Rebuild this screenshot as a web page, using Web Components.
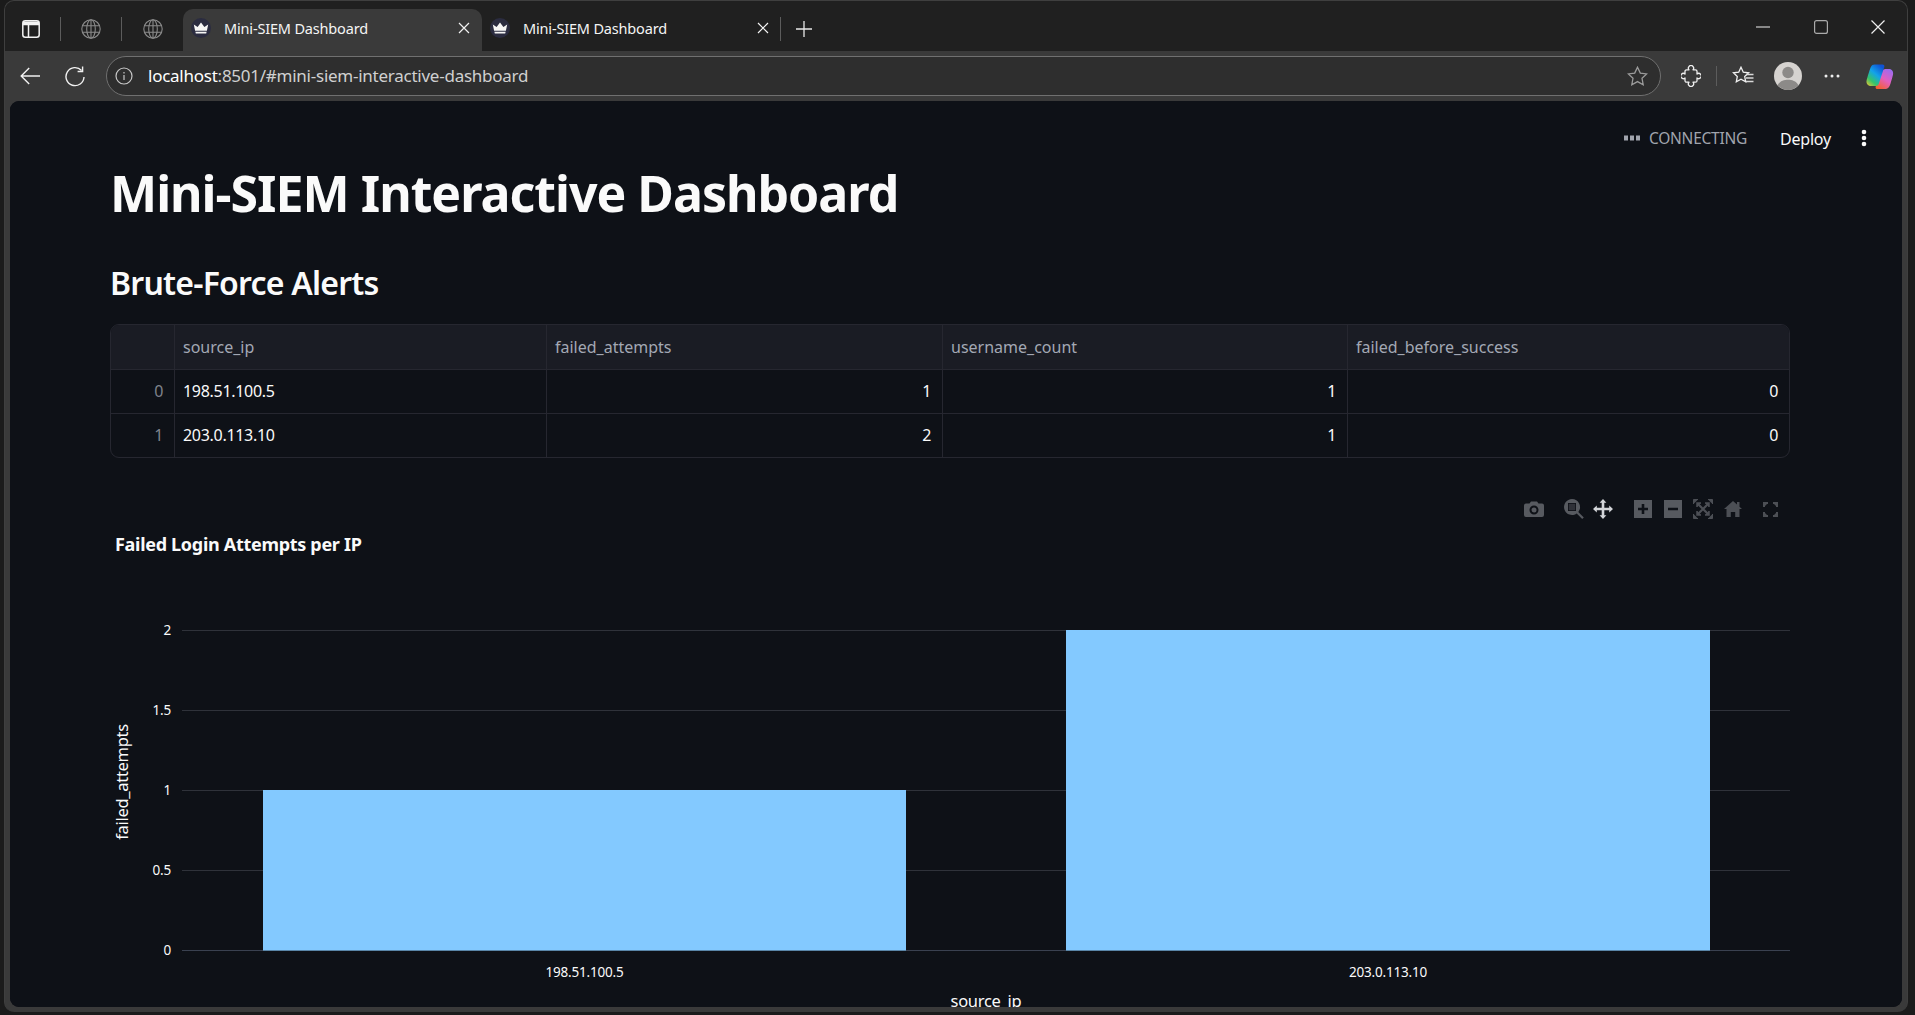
<!DOCTYPE html>
<html lang="en">
<head>
<meta charset="utf-8">
<title>Mini-SIEM Dashboard</title>
<style>
    html, body { margin: 0; padding: 0; height: 100%; background: #1b1b1b; overflow: hidden; }
</style>
</head>
<body>
<browser-window>
    <browser-tabs slot="tabs">
        <browser-tab active label="Mini-SIEM Dashboard"></browser-tab>
        <browser-tab label="Mini-SIEM Dashboard"></browser-tab>
    </browser-tabs>
    <browser-toolbar slot="toolbar" url="localhost:8501/#mini-siem-interactive-dashboard"></browser-toolbar>
    <st-app>
        <st-header></st-header>
        <st-heading level="1">Mini-SIEM Interactive Dashboard</st-heading>
        <st-heading level="2">Brute-Force Alerts</st-heading>
        <data-frame></data-frame>
        <bar-chart></bar-chart>
    </st-app>
</browser-window>

<script>
const chromeFont = '"Noto Sans", "Open Sans", sans-serif';
const appFont = '"Noto Sans", "Open Sans", sans-serif';

const globeIcon = `<svg width="20" height="20" viewBox="0 0 20 20" fill="none" stroke="#8a8a8a" stroke-width="1.1">
    <circle cx="10" cy="10" r="9.2"/><ellipse cx="10" cy="10" rx="4.3" ry="9.2"/>
    <path d="M10 .8v18.4M1.6 6.8h16.8M1.6 13.2h16.8"/></svg>`;
const crownIcon = `<svg width="20" height="20" viewBox="0 0 20 20">
    <circle cx="10" cy="10" r="10" fill="#2b2c40"/>
    <path d="M2.800 6.400 6.600 9 10 4.400 13.400 9l3.800-2.600-1.300 6.400H4.100z" fill="#f6f6f6"/>
    <path d="M4.400 13.700h11.200l-.4 1.800H4.800z" fill="#f6f6f6"/></svg>`;
const closeIcon = `<svg width="12" height="12" viewBox="0 0 12 12" stroke="#f2f2f2" stroke-width="1.2"><path d="M1 1l10 10M11 1 1 11"/></svg>`;

class BrowserWindow extends HTMLElement {
    constructor() {
        super();
        this.attachShadow({ mode: "open" });
        this.shadowRoot.innerHTML = `
            <style>
                :host {
                    display: flex;
                    flex-direction: column;
                    box-sizing: border-box;
                    width: 1904px;
                    height: 1012px;
                    margin-left: 4px;
                    background: #3a3a3a;
                    border: 1px solid #3f3f3f;
                    border-bottom: 0;
                    border-radius: 10px;
                    overflow: hidden;
                }
                .page {
                    flex: 1;
                    min-height: 0;
                    margin: 0 5px 5px 5px;
                    border-radius: 9px;
                    overflow: hidden;
                    background: #0e1117;
                }
            </style>
            <slot name="tabs"></slot>
            <slot name="toolbar"></slot>
            <div class="page"><slot></slot></div>
        `;
    }
}

class BrowserTabs extends HTMLElement {
    constructor() {
        super();
        this.attachShadow({ mode: "open" });
        this.shadowRoot.innerHTML = `
            <style>
                :host {
                    display: flex;
                    align-items: flex-end;
                    height: 50px;
                    background: #202020;
                    color: #fff;
                }
                .cell { display: flex; align-items: center; justify-content: center; height: 42px; flex: none; box-sizing: border-box; padding-bottom: 2px; }
                .sep { width: 1px; height: 24px; background: #5c5c5c; flex: none; margin-bottom: 10px; }
                .tabs { display: flex; align-items: flex-end; }
                .caption { margin-left: auto; display: flex; height: 42px; }
                .caption .cell { width: 58px; padding-bottom: 7px; }
                svg { display: block; }
            </style>
            <div class="cell" style="width:51px;margin-right:4px">
                <svg width="18" height="18" viewBox="0 0 18 18" fill="none" stroke="#f2f2f2" stroke-width="1.5">
                    <rect x=".8" y=".8" width="16.400" height="16.400" rx="2.500"/>
                    <path d="M1 1.500h16v3.800H1z" fill="#f2f2f2" stroke="none"/>
                    <path d="M6.500 5v12"/>
                </svg>
            </div>
            <span class="sep"></span>
            <div class="cell" style="width:60px">${globeIcon}</div>
            <span class="sep"></span>
            <div class="cell" style="width:61px">${globeIcon}</div>
            <div class="tabs"><slot></slot></div>
            <span class="sep" style="margin-left:-1px"></span>
            <div class="cell" style="width:46px">
                <svg width="16" height="16" viewBox="0 0 16 16" stroke="#e8e8e8" stroke-width="1.300"><path d="M8 0v16M0 8h16"/></svg>
            </div>
            <div class="caption">
                <div class="cell"><svg width="14" height="2" viewBox="0 0 14 2"><path d="M0 1h14" stroke="#eee" stroke-width="1.200"/></svg></div>
                <div class="cell"><svg width="14" height="14" viewBox="0 0 14 14" fill="none"><rect x=".6" y=".6" width="12.800" height="12.800" rx="2" stroke="#aaa" stroke-width="1.200"/></svg></div>
                <div class="cell" style="width:56px;margin-right:1px"><svg width="14" height="14" viewBox="0 0 14 14"><path d="M.5.500l13 13M13.500.500l-13 13" stroke="#eee" stroke-width="1.200"/></svg></div>
            </div>
        `;
    }
}

class BrowserTab extends HTMLElement {
    constructor() {
        super();
        this.attachShadow({ mode: "open" });
        this.shadowRoot.innerHTML = `
            <style>
                :host {
                    display: flex;
                    align-items: center;
                    box-sizing: border-box;
                    width: 299px;
                    height: 42px;
                    padding: 0 12px 4px 8px;
                    border-radius: 10px 10px 0 0;
                    font: 14px ${chromeFont};
                    color: #f4f4f4;
                    flex: none;
                }
                :host([active]) { background: #3a3a3a; }
                .label { flex: 1; margin-left: 13px; white-space: nowrap; font-size: 14.500px; letter-spacing: -.17px; }
                svg { display: block; }
            </style>
            ${crownIcon}
            <span class="label"></span>
            ${closeIcon}
        `;
        this.shadowRoot.querySelector(".label").textContent = this.getAttribute("label");
    }
}

class BrowserToolbar extends HTMLElement {
    constructor() {
        super();
        this.attachShadow({ mode: "open" });
        const url = this.getAttribute("url");
        const host = url.slice(0, url.indexOf(":"));
        const rest = url.slice(url.indexOf(":"));
        this.shadowRoot.innerHTML = `
            <style>
                :host {
                    display: flex;
                    align-items: center;
                    height: 50px;
                    background: #3a3a3a;
                    padding-left: 7px;
                    box-sizing: border-box;
                }
                .btn { display: flex; align-items: center; justify-content: center; flex: none; }
                .addr {
                    display: flex;
                    align-items: center;
                    box-sizing: border-box;
                    flex: none;
                    width: 1555px;
                    height: 40px;
                    margin-left: 5px;
                    padding: 0 12px 0 8px;
                    border: 1px solid #707070;
                    border-radius: 20px;
                    background: #2e2e2e;
                    font: 17px ${chromeFont};
                    letter-spacing: -.25px;
                    color: #d0d0d0;
                }
                .addr b { font-weight: 400; color: #fff; }
                .url { flex: 1; margin: -2px 0 0 15px; white-space: nowrap; }
                .sep { width: 1px; height: 20px; background: #5c5c5c; flex: none; }
                svg { display: block; }
            </style>
            <div class="btn" style="width:36px">
                <svg width="20" height="18" viewBox="0 0 20 18" fill="none" stroke="#f0f0f0" stroke-width="1.400"><path d="M20 9H1.200M9.200 1 1.200 9l8 8"/></svg>
            </div>
            <div class="btn" style="width:53px">
                <svg width="20" height="21" viewBox="0 0 20 21" fill="none" stroke="#f0f0f0" stroke-width="1.400"><path d="M16.600 4.500A9 9 0 1 0 19 11"/><path d="M17.600.500v5h-5"/></svg>
            </div>
            <div class="addr">
                <svg width="18" height="18" viewBox="0 0 18 18" fill="none" stroke="#c8c8c8" stroke-width="1.200"><circle cx="9" cy="9" r="8"/><path d="M9 8v5M9 5v1.400"/></svg>
                <span class="url"><b>${host}</b>${rest}</span>
                <svg width="21" height="20" viewBox="0 0 21 20" fill="none" stroke="#9b9b9b" stroke-width="1.300"><path d="m10.500 1.200 2.800 5.900 6.400.8-4.700 4.400 1.200 6.400-5.700-3.100-5.700 3.100 1.200-6.400L1.300 7.900l6.400-.8z"/></svg>
            </div>
            <div class="btn" style="width:50px;margin-left:5px">
                <svg width="20" height="22" viewBox="0 0 20 22" fill="none" stroke="#f0f0f0" stroke-width="1.300" stroke-linejoin="round"><path d="M5.500 4.800H8a2.600 2.600 0 1 1 4 0h2.500a1.500 1.500 0 0 1 1.500 1.500V9a2.600 2.600 0 1 1 0 4v2.700a1.500 1.500 0 0 1-1.500 1.500H12a2.600 2.600 0 1 1-4 0H5.500A1.500 1.500 0 0 1 4 15.700V13a2.600 2.600 0 1 1 0-4V6.300a1.500 1.500 0 0 1 1.500-1.500z"/></svg>
            </div>
            <span class="sep"></span>
            <div class="btn" style="width:52px">
                <svg width="22" height="20" viewBox="0 0 22 20" fill="none" stroke="#f0f0f0" stroke-width="1.300"><path d="m9 1.200 2.300 5 5.300.6-3.900 3.700 1 5.300L9 13.200l-4.700 2.600 1-5.300-3.900-3.700 5.300-.6z"/><path d="M14 8.500h7.500M14 12h7.500M14 15.500h7.500" stroke="#d8d8d8"/></svg>
            </div>
            <div class="btn" style="width:38px">
                <svg width="28" height="28" viewBox="0 0 28 28">
                    <circle cx="14" cy="14" r="14" fill="#d6d3d0"/>
                    <circle cx="14" cy="10.500" r="5.700" fill="#8c8a88"/>
                    <path d="M3.500 23.300C6 19 10 17.800 14 17.800s8 1.200 10.500 5.500A14 14 0 0 1 14 28 14 14 0 0 1 3.500 23.300z" fill="#8c8a88"/>
                </svg>
            </div>
            <div class="btn" style="width:50px">
                <svg width="16" height="4" viewBox="0 0 16 4" fill="#eee"><circle cx="2" cy="2" r="1.500"/><circle cx="8" cy="2" r="1.500"/><circle cx="14" cy="2" r="1.500"/></svg>
            </div>
            <div class="btn" style="width:46px">
                <svg width="28" height="27" viewBox="0 0 28 27">
                    <defs>
                        <linearGradient id="cpA" x1="0" y1="1" x2=".7" y2="0"><stop offset="0" stop-color="#f7c52e"/><stop offset=".3" stop-color="#35c46a"/><stop offset=".62" stop-color="#12a3ea"/><stop offset="1" stop-color="#0f52d4"/></linearGradient>
                        <linearGradient id="cpB" x1=".8" y1="0" x2=".2" y2="1"><stop offset="0" stop-color="#9a6cf0"/><stop offset=".5" stop-color="#e35fc0"/><stop offset="1" stop-color="#f4602c"/></linearGradient>
                    </defs>
                    <path d="M19.500 6H23c3 0 4.700 2.600 4 5.800-1 4-2.500 9.300-3.300 11-.8 2-2.200 3.200-4.200 3.200h-8c-1.500 0-2.300-1.300-1.800-2.600l6.400-15.400C16.600 6.700 18 6 19.500 6z" fill="url(#cpB)"/>
                    <path d="M8.500 1.500h8c1.500 0 2.200 1.200 1.800 2.600l-5.600 17c-.5 1.300-1.400 2-2.900 2H5c-3.300 0-5-2.700-4.400-5.800C1.300 14.500 4.200 4.800 5 3.700 5.800 2.300 7 1.500 8.500 1.500z" fill="url(#cpA)"/>
                </svg>
            </div>
        `;
    }
}

class StApp extends HTMLElement {
    constructor() {
        super();
        this.attachShadow({ mode: "open" });
        this.shadowRoot.innerHTML = `
            <style>
                :host {
                    display: block;
                    height: 100%;
                    box-sizing: border-box;
                    padding: 0 112px 0 100px;
                    overflow: hidden;
                    background: #0e1117;
                    color: #fafafa;
                    font-family: ${appFont};
                }
            </style>
            <slot></slot>
        `;
    }
}

class StHeader extends HTMLElement {
    constructor() {
        super();
        this.attachShadow({ mode: "open" });
        this.shadowRoot.innerHTML = `
            <style>
                :host {
                    display: flex;
                    align-items: center;
                    justify-content: flex-end;
                    box-sizing: border-box;
                    height: 60px;
                    margin-right: -112px;
                    padding: 14px 35px 0 0;
                    font-size: 15.500px;
                }
                .status { display: flex; align-items: center; gap: 9px; color: #a0a4ad; letter-spacing: -.25px; margin-right: 33px; }
                .deploy { color: #fafafa; margin: 1px 30px 0 0; font-size: 16px; letter-spacing: -.2px; }
                svg { display: block; }
            </style>
            <div class="status">
                <svg width="16" height="6" viewBox="0 0 16 6" fill="#a0a4ad"><rect y=".5" width="4" height="5"/><rect x="6" y=".5" width="4" height="5"/><rect x="12" y=".5" width="4" height="5"/></svg>
                <span>CONNECTING</span>
            </div>
            <span class="deploy">Deploy</span>
            <svg width="6" height="18" viewBox="0 0 6 18" fill="#fafafa"><circle cx="3" cy="3" r="2.300"/><circle cx="3" cy="9" r="2.300"/><circle cx="3" cy="15" r="2.300"/></svg>
        `;
    }
}

class StHeading extends HTMLElement {
    constructor() {
        super();
        this.attachShadow({ mode: "open" });
        this.shadowRoot.innerHTML = `
            <style>
                :host { display: block; color: #fafafa; white-space: nowrap; }
                :host([level="1"]) { font-size: 50px; font-weight: 700; height: 64px; line-height: 64px; letter-spacing: -1px; }
                :host([level="2"]) { font-size: 32px; font-weight: 600; height: 44px; line-height: 44px; margin-top: 36px; letter-spacing: -.78px; }
            </style>
            <slot></slot>
        `;
    }
}

class DataFrame extends HTMLElement {
    constructor() {
        super();
        this.attachShadow({ mode: "open" });
        const columns = ["source_ip", "failed_attempts", "username_count", "failed_before_success"];
        const rows = [
            ["0", "198.51.100.5", 1, 1, 0],
            ["1", "203.0.113.10", 2, 1, 0]
        ];
        let cells = `<div class="head"></div>` + columns.map(c => `<div class="head">${c}</div>`).join("");
        rows.forEach(r => {
            cells += `<div class="index">${r[0]}</div><div>${r[1]}</div>`;
            cells += r.slice(2).map(v => `<div class="num">${v}</div>`).join("");
        });
        this.shadowRoot.innerHTML = `
            <style>
                :host {
                    display: block;
                    box-sizing: border-box;
                    margin-top: 19px;
                    height: 134px;
                    border: 1px solid #262730;
                    border-radius: 9px;
                    overflow: hidden;
                    font-size: 16px;
                }
                .grid {
                    display: grid;
                    grid-template-columns: 64px 372px 396px 405px 1fr;
                    grid-template-rows: 45px 44px 44px;
                }
                .grid div {
                    display: flex;
                    align-items: center;
                    padding: 0 11px 2px 8px;
                    box-sizing: border-box;
                    border-right: 1px solid #262730;
                    border-bottom: 1px solid #262730;
                    color: #fafafa;
                    letter-spacing: -.3px;
                    white-space: nowrap;
                }
                .grid div:nth-child(5n) { border-right: 0; }
                .grid div:nth-last-child(-n+5) { border-bottom: 0; }
                .grid .head { background: #1a1c24; color: #a3a8b4; letter-spacing: 0; padding-bottom: 0; }
                .grid .index { color: #7f838c; justify-content: flex-end; }
                .grid .num { justify-content: flex-end; }
            </style>
            <div class="grid">${cells}</div>
        `;
    }
}

class BarChart extends HTMLElement {
    constructor() {
        super();
        this.attachShadow({ mode: "open" });
        const data = [
            { label: "198.51.100.5", value: 1, x0: 263, x1: 906 },
            { label: "203.0.113.10", value: 2, x0: 1066, x1: 1710 }
        ];
        const y = v => 950 - v * 160;
        const ticks = [0, 0.5, 1, 1.5, 2];
        const grid = ticks.slice(1).map(t => `<path d="M182 ${y(t) + 0.5}H1790" stroke="#2f323a"/>`).join("");
        const tickText = ticks.map(t => `<text x="171" y="${y(t) + 5}" text-anchor="end">${t}</text>`).join("");
        const bars = data.map(d => `<rect x="${d.x0}" y="${y(d.value)}" width="${d.x1 - d.x0}" height="${950 - y(d.value)}" fill="#83c9ff"/>`).join("");
        const labels = data.map(d => `<text x="${(d.x0 + d.x1) / 2}" y="977" text-anchor="middle">${d.label}</text>`).join("");
        this.shadowRoot.innerHTML = `
            <style>
                :host { display: block; position: relative; margin-top: 32px; height: 520px; }
                svg.plot { display: block; font-family: ${appFont}; fill: #fafafa; }
                .ticks { font-size: 13.500px; letter-spacing: -.2px; }
                .title { font-size: 18px; font-weight: 700; letter-spacing: -.3px; }
                .axis { font-size: 16.500px; letter-spacing: -.3px; }
                .modebar {
                    position: absolute;
                    top: 7px;
                    right: 12px;
                    display: flex;
                    align-items: center;
                    height: 24px;
                    color: #575a60;
                }
                .modebar svg { display: block; flex: none; fill: currentColor; }
            </style>
            <svg class="plot" width="1680" height="520" viewBox="110 490 1680 520">
                <text class="title" x="115" y="551">Failed Login Attempts per IP</text>
                ${grid}
                ${bars}
                <path d="M182 950.500H1790" stroke="#3a4150"/>
                <path d="M263 950.500H906M1066 950.500H1710" stroke="#5a86a8"/>
                <g class="ticks">${tickText}${labels}</g>
                <text class="axis" transform="translate(128 782) rotate(-90)" text-anchor="middle">failed_attempts</text>
                <text class="axis" x="986" y="1007" text-anchor="middle">source_ip</text>
            </svg>
            <div class="modebar">
                <svg width="20" height="16" viewBox="0 0 20 16" fill-rule="evenodd"><path d="M2 2.500h3.500L7 .5h6l1.500 2H18a2 2 0 0 1 2 2V14a2 2 0 0 1-2 2H2a2 2 0 0 1-2-2V4.500a2 2 0 0 1 2-2zM10 4.500a4.500 4.500 0 1 0 0 9 4.500 4.500 0 0 0 0-9zM10 6.500a2.500 2.500 0 1 1 0 5 2.500 2.500 0 0 1 0-5z"/></svg>
                <svg style="margin-left:20px" width="20" height="20" viewBox="0 0 20 20" fill-rule="evenodd"><path d="M8 0a8 8 0 0 1 6.300 12.900l5.500 5.500-1.600 1.600-5.500-5.500A8 8 0 1 1 8 0zM4 4v8h8V4z"/><path d="M4.800 4.800h6.400v6.400H4.800z" fill="#2f3138"/></svg>
                <svg style="margin-left:9px;color:#d3d5d9" width="20" height="20" viewBox="0 0 20 20"><path d="M10 0l3.400 3.800h-2.100v4.900h4.900V6.600L20 10l-3.800 3.400v-2.100h-4.900v4.900h2.100L10 20l-3.400-3.800h2.100v-4.900H3.800v2.100L0 10l3.800-3.400v2.100h4.900V3.800H6.600z"/></svg>
                <svg style="margin-left:21px" width="18" height="18" viewBox="0 0 18 18" fill-rule="evenodd"><path d="M0 0h18v18H0zM7.700 4v3.700H4v2.600h3.700V14h2.600v-3.700H14V7.700h-3.700V4z"/></svg>
                <svg style="margin-left:12px" width="18" height="18" viewBox="0 0 18 18" fill-rule="evenodd"><path d="M0 0h18v18H0zM4 7.700v2.600h10V7.700z"/></svg>
                <svg style="margin-left:11px;color:#4c4f55" width="20" height="20" viewBox="0 0 20 20" fill="none" stroke="currentColor"><path d="M.5 5V.5H5M15 .5h4.500V5M19.500 15v4.500H15M5 19.500H.5V15" stroke-width="1"/><path d="m5 5 10 10M15 5 5 15" stroke-width="2.200"/><path d="M4 8V4h4M16 8V4h-4M16 12v4h-4M4 12v4h4" stroke-width="1.500"/></svg>
                <svg style="margin-left:11px;color:#4c4f55" width="18" height="16" viewBox="0 0 18 16"><path d="M9 0l4 3.500V1h2.500v4.700L18 8h-2.500v8h-4.300v-5H6.800v5H2.500V8H0z"/></svg>
                <svg style="margin-left:21px;color:#4c4f55" width="15" height="15" viewBox="0 0 15 15" fill="none" stroke="currentColor" stroke-width="2"><path d="M1 5V1h4M10 1h4v4M14 10v4h-4M5 14H1v-4"/></svg>
            </div>
        `;
    }
}

customElements.define("browser-window", BrowserWindow);
customElements.define("browser-tabs", BrowserTabs);
customElements.define("browser-tab", BrowserTab);
customElements.define("browser-toolbar", BrowserToolbar);
customElements.define("st-app", StApp);
customElements.define("st-header", StHeader);
customElements.define("st-heading", StHeading);
customElements.define("data-frame", DataFrame);
customElements.define("bar-chart", BarChart);
</script>
</body>
</html>
